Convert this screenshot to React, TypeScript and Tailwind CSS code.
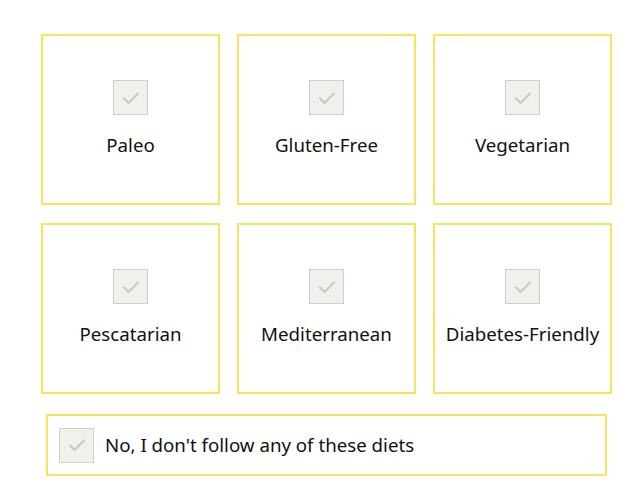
import React from 'react'

const diets = ['Paleo', 'Gluten-Free', 'Vegetarian', 'Pescatarian', 'Mediterranean', 'Diabetes-Friendly']

function Check() {
  return (
    <div className="w-[35px] h-[35px] shrink-0 bg-[#f1f0ec] border border-[#cfcfcb] flex items-center justify-center">
      <svg width="20" height="20" viewBox="0 0 20 20" fill="none">
        <path d="M3 10.5l4.5 4.5L17 5.5" stroke="#c9c9c6" strokeWidth="2.2" strokeLinecap="round" strokeLinejoin="round" />
      </svg>
    </div>
  )
}

export default function App() {
  return (
    <div className="w-[644px] h-[490px] bg-white pt-[34px] pl-[41px]" style={{ fontFamily: '"Noto Sans", Lato, sans-serif' }}>
      <div className="grid grid-cols-[179px_179px_179px] gap-x-[17px] gap-y-[18px] w-[571px]">
        {diets.map((d) => (
          <div key={d} className="h-[171px] border-2 border-[#f8e45c] flex flex-col items-center pt-[44px]">
            <Check />
            <div className="mt-[18px] text-[18.7px] text-[#111] whitespace-nowrap leading-[24px]">{d}</div>
          </div>
        ))}
      </div>
      <div className="mt-[20px] ml-[5px] w-[561px] h-[62px] border-2 border-[#f8e45c] flex items-center pl-[11px] gap-[11px]">
        <Check />
        <span className="text-[18.7px] text-[#111] leading-[24px]">No, I don't follow any of these diets</span>
      </div>
    </div>
  )
}
